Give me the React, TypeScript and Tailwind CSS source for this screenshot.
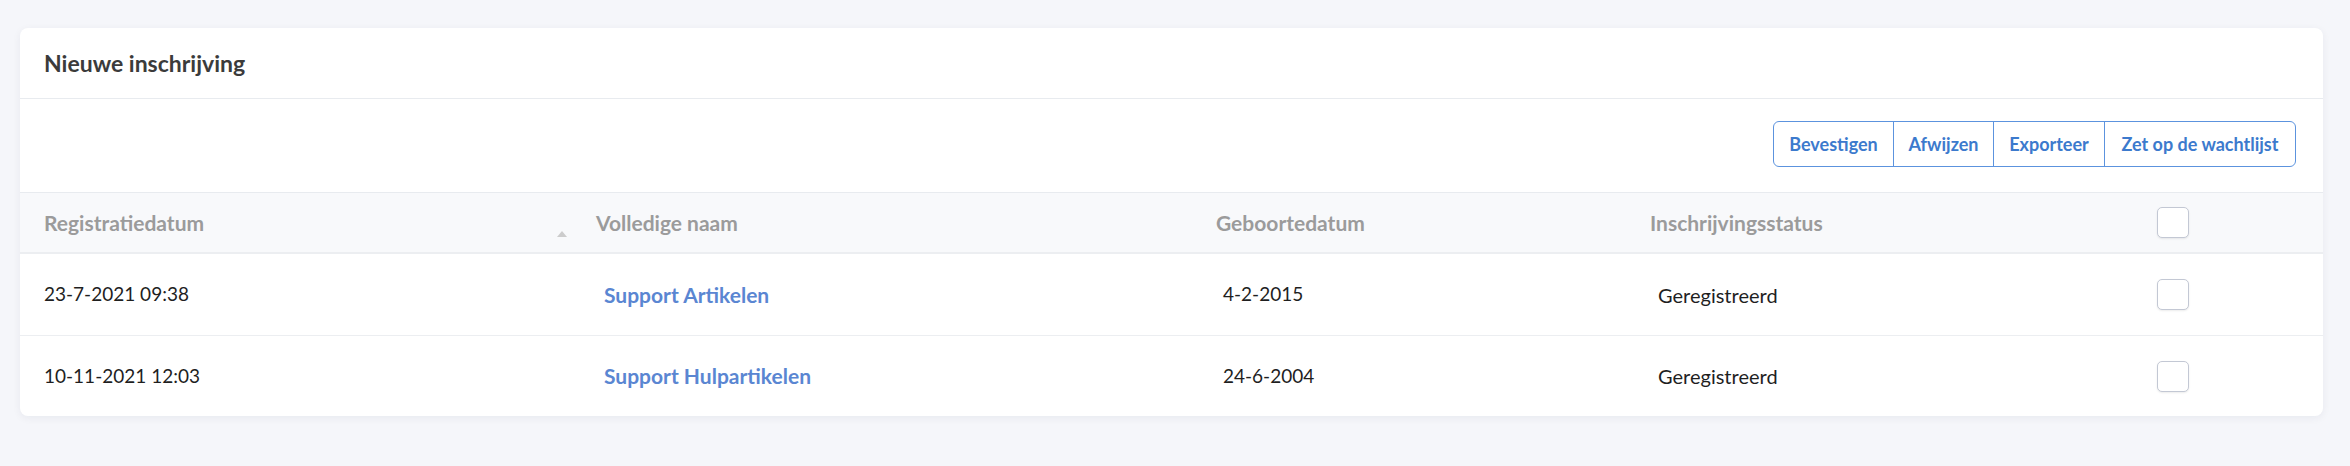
import React from "react";

const rows = [
  { date: "23-7-2021 09:38", name: "Support Artikelen", birth: "4-2-2015", status: "Geregistreerd" },
  { date: "10-11-2021 12:03", name: "Support Hulpartikelen", birth: "24-6-2004", status: "Geregistreerd" },
];

function Checkbox() {
  return (
    <div className="w-[32px] h-[31px] rounded-[5px] border border-[#c3c8d4] bg-white shadow-[0_1px_2px_rgba(0,0,0,0.08)]" />
  );
}

export default function App() {
  return (
    <div
      className="w-[2350px] h-[466px] bg-[#f5f6fa] pt-[28px] pl-[20px]"
      style={{ fontFamily: "Lato, 'Noto Sans', sans-serif" }}
    >
      <div className="w-[2303px] bg-white rounded-[8px] shadow-[0_2px_8px_rgba(20,30,60,0.06)] overflow-hidden">
        <div className="h-[71px] border-b border-[#e8ebef] flex items-center pl-[24px]">
          <span className="text-[23px] font-bold text-[#3b3b3b]">Nieuwe inschrijving</span>
        </div>
        <div className="h-[94px] border-b border-[#e8ebef] flex justify-end items-start pt-[22px] pr-[27px]">
          <div className="flex h-[46px] border border-[#5c93de] rounded-[6px] divide-x divide-[#5c93de] text-[18px] font-bold text-[#3c7acd]">
            <div className="w-[120px] flex items-center justify-center">Bevestigen</div>
            <div className="w-[100px] flex items-center justify-center">Afwijzen</div>
            <div className="w-[111px] flex items-center justify-center">Exporteer</div>
            <div className="w-[190px] flex items-center justify-center">Zet op de wachtlijst</div>
          </div>
        </div>
        <div className="grid grid-cols-[552px_620px_434px_507px_190px] h-[61px] bg-[#f8f9fb] border-b-2 border-[#eceef1] text-[21px] font-bold text-[#9b9b9b]">
          <div className="flex items-center pl-[24px] pr-[5px] relative">
            <span>Registratiedatum</span>
            <span className="absolute right-[5px] top-[38px] w-0 h-0 border-l-[5px] border-r-[5px] border-b-[6px] border-l-transparent border-r-transparent border-b-[#cccccc]" />
          </div>
          <div className="flex items-center pl-[24px]">Volledige naam</div>
          <div className="flex items-center pl-[24px]">Geboortedatum</div>
          <div className="flex items-center pl-[24px]">Inschrijvingsstatus</div>
          <div className="flex items-center pl-[24px]">
            <Checkbox />
          </div>
        </div>
        {rows.map((r, i) => (
          <div
            key={i}
            className={
              "grid grid-cols-[552px_620px_434px_507px_190px] text-[20px] text-[#1f1f1f] " +
              (i === 0 ? "h-[82px] border-b border-[#eceef1]" : "h-[80px]")
            }
          >
            <div className="flex items-center pl-[24px] text-[19px]">{r.date}</div>
            <div className="flex items-center pl-[32px]">
              <span className="text-[21px] font-bold text-[#5a86d2]">{r.name}</span>
            </div>
            <div className="flex items-center pl-[31px] text-[19px]">{r.birth}</div>
            <div className="flex items-center pl-[32px]">{r.status}</div>
            <div className="flex items-center pl-[24px]">
              <Checkbox />
            </div>
          </div>
        ))}
      </div>
    </div>
  );
}
